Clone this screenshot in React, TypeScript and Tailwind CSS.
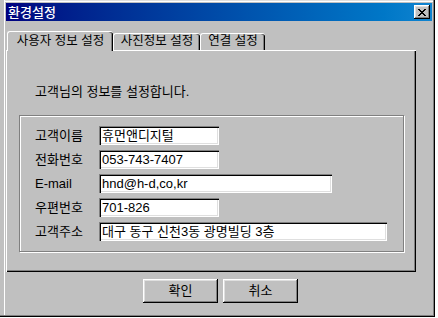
import React from "react";

const font = "font-['Liberation_Sans','Noto_Sans_CJK_KR',sans-serif]";

const fields = [
  { label: "고객이름", value: "휴먼앤디지털", width: "w-[120px]" },
  { label: "전화번호", value: "053-743-7407", width: "w-[120px]" },
  { label: "E-mail", value: "hnd@h-d,co,kr", width: "w-[233px]" },
  { label: "우편번호", value: "701-826", width: "w-[120px]" },
  { label: "고객주소", value: "대구 동구 신천3동 광명빌딩 3층", width: "w-[288px]" },
];

const CloseButton = () => (
  <div className="w-[16px] h-[14px] bg-[#c0c0c0] flex items-center justify-center shadow-[inset_-1px_-1px_0_#000,inset_1px_1px_0_#fff,inset_-2px_-2px_0_#808080,inset_2px_2px_0_#dfdfdf]">
    <svg width="8" height="7" viewBox="0 0 8 7" shapeRendering="crispEdges">
      <path
        d="M0 0h2v1h-2zM6 0h2v1h-2zM1 1h2v1h-2zM5 1h2v1h-2zM2 2h4v1h-4zM3 3h2v1h-2zM2 4h4v1h-4zM1 5h2v1h-2zM5 5h2v1h-2zM0 6h2v1h-2zM6 6h2v1h-2z"
        fill="#000"
      />
    </svg>
  </div>
);

const Tab = ({ label, active, width }: { label: string; active?: boolean; width: string }) => (
  <div
    className={
      active
        ? `${width} h-[20px] -mb-[1px] relative z-10 bg-[#c0c0c0] rounded-t-[3px] border-l border-t border-white shadow-[inset_-1px_0_0_#000,inset_-2px_0_0_#808080] flex items-start justify-center pt-[2px] text-[12.5px] text-black`
        : `${width} h-[17px] bg-[#c0c0c0] rounded-t-[3px] border-l border-t border-white shadow-[inset_-1px_0_0_#000,inset_-2px_0_0_#808080] flex items-start justify-center pt-[0px] text-[12.5px] text-black`
    }
  >
    <span className="leading-[15px]">{label}</span>
  </div>
);

const Button = ({ label }: { label: string }) => (
  <div className="w-[75px] h-[24px] bg-[#c0c0c0] flex items-center justify-center text-[13px] text-black shadow-[inset_-1px_-1px_0_#000,inset_1px_1px_0_#fff,inset_-2px_-2px_0_#808080,inset_2px_2px_0_#dfdfdf]">
    {label}
  </div>
);

export default function App() {
  return (
    <div className={`w-[438px] h-[318px] bg-white ${font}`}>
      <div className="w-[435px] h-[317px] bg-[#c0c0c0] flex flex-col shadow-[inset_-1px_-1px_0_#000,inset_-2px_-2px_0_#808080,inset_4px_0_0_#c0c0c0,inset_5px_0_0_#fff,inset_0_1px_0_#dfdfdf,inset_0_2px_0_#fff]">
        {/* Title bar */}
        <div className="mt-[3px] ml-[6px] w-[426px] h-[18px] flex items-center justify-between pl-[2px] pr-[2px] bg-gradient-to-r from-[#000080] to-[#1084d0]">
          <span className="text-white text-[13px] font-medium leading-[15px]">환경설정</span>
          <CloseButton />
        </div>

        {/* Tabs */}
        <div className="mt-[10px] ml-[7px] h-[19px] flex items-end">
          <Tab label="사용자 정보 설정" active width="w-[106px]" />
          <Tab label="사진정보 설정" width="w-[87px]" />
          <Tab label="연결 설정" width="w-[65px]" />
        </div>

        {/* Tab panel */}
        <div className="ml-[6px] w-[410px] h-[222px] border-l border-t border-white shadow-[inset_-1px_-1px_0_#000,inset_-2px_-2px_0_#808080] flex flex-col">
          <p className="mt-[33px] ml-[28px] text-[13px] leading-[15px] text-black">
            고객님의 정보를 설정합니다.
          </p>

          {/* Group box */}
          <div className="mt-[16px] ml-[12px] w-[385px] h-[137px] border border-[#808080] shadow-[inset_1px_1px_0_#fff,1px_1px_0_#fff] pt-[10px] pl-[15px] flex flex-col gap-[5px]">
            {fields.map((f) => (
              <div key={f.label} className="flex items-center h-[19px]">
                <span className="w-[64px] text-[13px] text-black leading-[15px]">{f.label}</span>
                <div
                  className={`${f.width} h-[19px] bg-white flex items-center pl-[3px] text-[13px] text-black leading-[15px] shadow-[inset_1px_1px_0_#808080,inset_2px_2px_0_#000,inset_-1px_-1px_0_#fff,inset_-2px_-2px_0_#dfdfdf]`}
                >
                  {f.value}
                </div>
              </div>
            ))}
          </div>
        </div>

        {/* Buttons */}
        <div className="mt-[7px] ml-[143px] flex gap-[5px]">
          <Button label="확인" />
          <Button label="취소" />
        </div>
      </div>
    </div>
  );
}
